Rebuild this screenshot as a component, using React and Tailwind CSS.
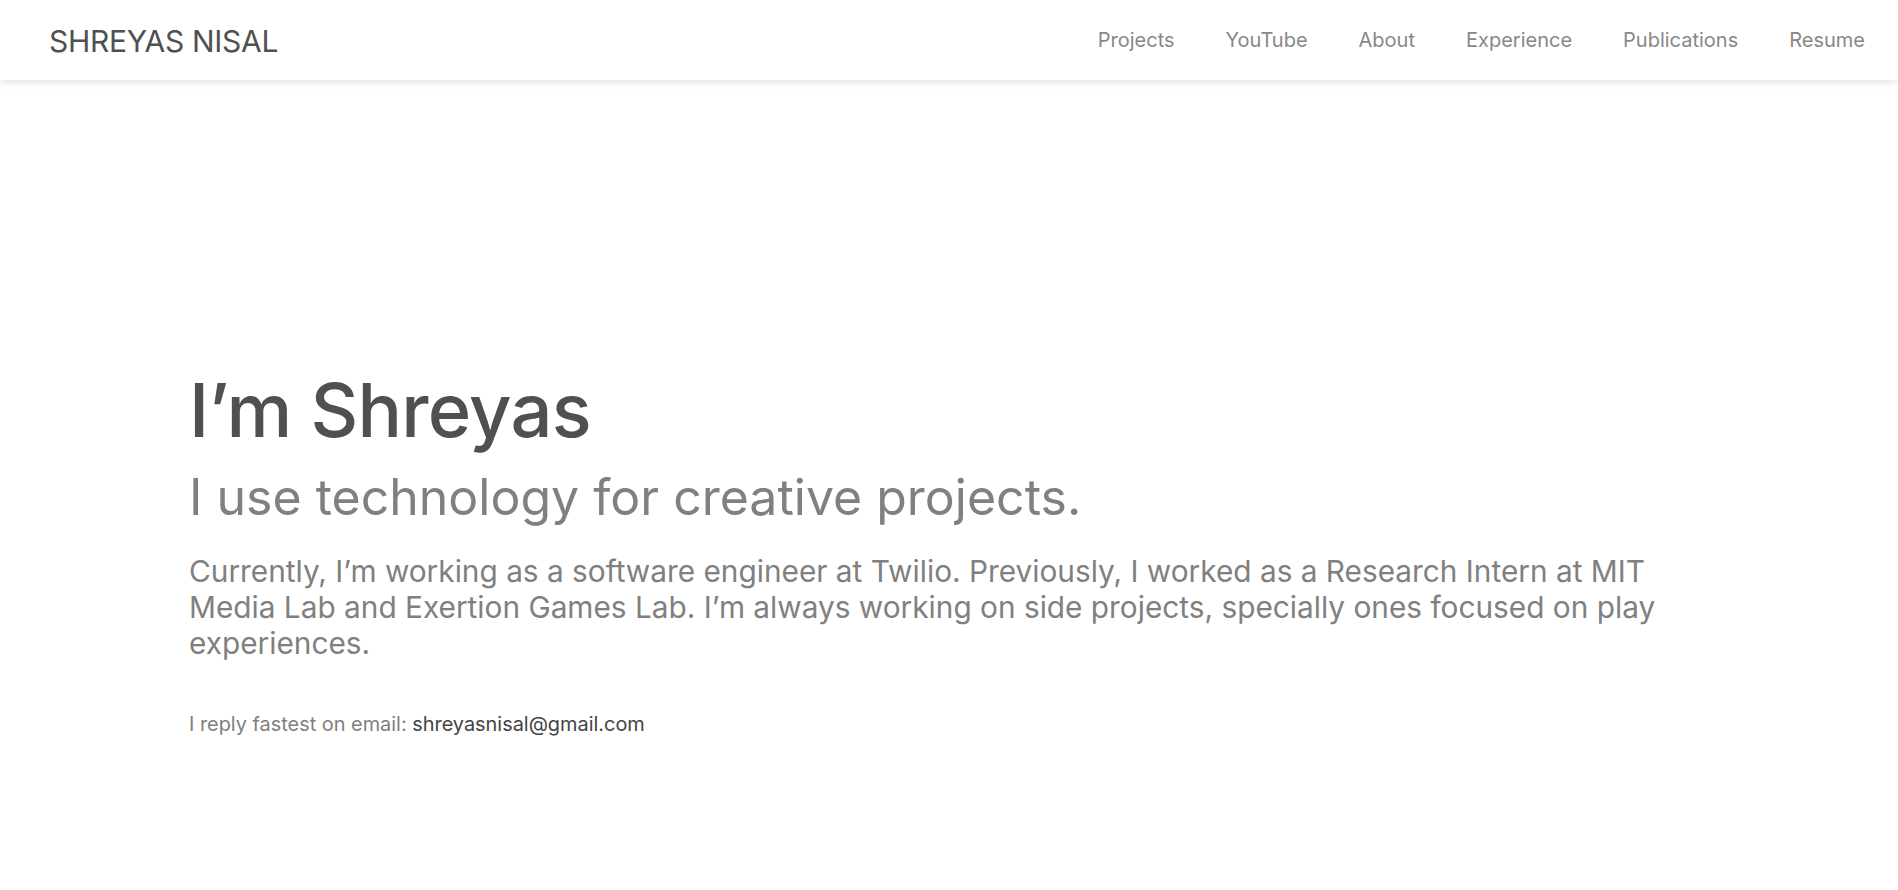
import React from "react";

const links = ["Projects", "YouTube", "About", "Experience", "Publications", "Resume"];

function Header() {
  return (
    <header className="h-[80px] bg-white flex items-center justify-between pl-[49px] pr-[33px] shadow-[0_2px_8px_rgba(0,0,0,0.12)] relative z-10">
      <a className="text-[30px] leading-none text-[#505050] tracking-[-0.01em] pt-[1px]">SHREYAS NISAL</a>
      <nav className="flex items-center gap-[51px]">
        {links.map((l) => (
          <a key={l} className="text-[20px] text-[#888888]">
            {l}
          </a>
        ))}
      </nav>
    </header>
  );
}

export default function App() {
  return (
    <div className="min-h-screen bg-white font-['Inter',sans-serif]">
      <Header />
      <main className="pl-[189px] pt-[285px] pb-[150px]">
        <h1 className="text-[74px] leading-[90px] font-medium text-[#505050] tracking-[-0.01em]">I’m Shreyas</h1>
        <h2 className="text-[50px] leading-[60px] text-[#808080] mt-[12px]">I use technology for creative projects.</h2>
        <p className="text-[29.8px] leading-[36px] text-[#808080] max-w-[1490px] mt-[26px]">
          Currently, I’m working as a software engineer at Twilio. Previously, I worked as a Research Intern at MIT
          Media Lab and Exertion Games Lab. I’m always working on side projects, specially ones focused on play
          experiences.
        </p>
        <p className="text-[19.9px] leading-[30px] text-[#808080] mt-[48px]">
          I reply fastest on email: <a className="text-[#444444]">shreyasnisal@gmail.com</a>
        </p>
      </main>
    </div>
  );
}
